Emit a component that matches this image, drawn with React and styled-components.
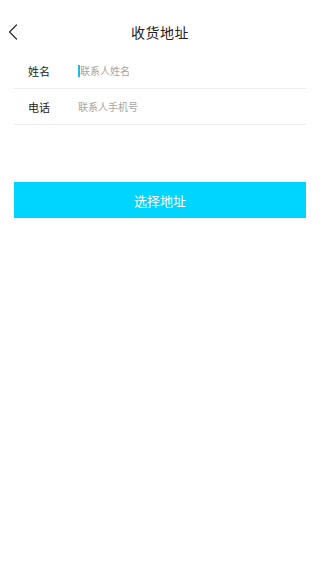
import React, { useState } from 'react';
import styled, { createGlobalStyle } from 'styled-components';

const GlobalStyle = createGlobalStyle`
    html, body {
        margin: 0;
        padding: 0;
        background: #fff;
        font-family: "Noto Sans CJK SC", "Noto Sans", sans-serif;
    }
`;

function App() {
    const [name, setName] = useState('');
    const [phone, setPhone] = useState('');

    return (
        <Page>
        <GlobalStyle />
        <Header>
            <BackButton aria-label="back">
            <svg width="10" height="16" viewBox="0 0 10 16" fill="none">
                <path d="M8.5 1 L1.5 8 L8.5 15" stroke="#333" strokeWidth="1.3" strokeLinecap="round" strokeLinejoin="round" />
            </svg>
            </BackButton>
            <Title>收货地址</Title>
        </Header>
        <Form>
            <Row>
            <Label>姓名</Label>
            <Caret />
            <Input
                type="text"
                placeholder="联系人姓名"
                value={name}
                onChange={(e) => setName(e.target.value)}
            />
            </Row>
            <Row>
            <Label>电话</Label>
            <Input
                type="tel"
                placeholder="联系人手机号"
                value={phone}
                onChange={(e) => setPhone(e.target.value)}
            />
            </Row>
        </Form>
        <SubmitButton type="button">选择地址</SubmitButton>
        </Page>
    );
}

export default App;



// styled-components
const Page = styled.div`
    width: 320px;
    min-height: 568px;
    background: #fff;
    display: flex;
    flex-direction: column;
`;

const Header = styled.div`
    height: 53px;
    padding-top: 10px;
    box-sizing: border-box;
    display: flex;
    align-items: center;
    justify-content: center;
    position: relative;
`;

const BackButton = styled.button`
    position: absolute;
    left: 6px;
    top: 22px;
    background: none;
    border: none;
    padding: 2px;
    display: flex;
    cursor: pointer;
`;

const Title = styled.div`
    font-size: 14px;
    color: #222;
    letter-spacing: 0.5px;
`;

const Form = styled.div`
    margin: 0 14px;
    display: flex;
    flex-direction: column;
`;

const Row = styled.div`
    height: 36px;
    box-sizing: border-box;
    display: flex;
    align-items: center;
    border-bottom: 1px solid #ededed;
    padding-left: 14px;
`;

const Label = styled.div`
    width: 50px;
    font-size: 11px;
    color: #222;
`;

const Caret = styled.span`
    width: 2px;
    height: 12px;
    background: #1fb6e8;
`;

const Input = styled.input`
    flex: 1;
    border: none;
    outline: none;
    background: transparent;
    padding: 0;
    font-family: inherit;
    font-size: 10px;
    color: #333;

    &::placeholder {
        color: #a5a5a5;
    }
`;

const SubmitButton = styled.button`
    margin: 57px 14px 0;
    height: 36px;
    border: none;
    background: #00d5ff;
    color: #fff;
    font-family: inherit;
    font-size: 13px;
    cursor: pointer;
`;
